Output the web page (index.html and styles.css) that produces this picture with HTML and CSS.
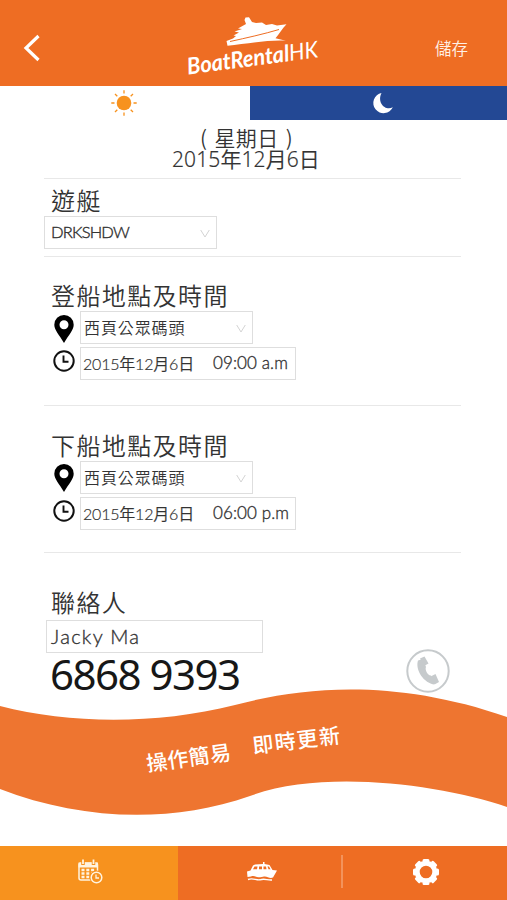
FILE: index.html
```html
<!DOCTYPE html>
<html lang="zh-Hant">
<head>
<meta charset="utf-8">
<title>Boat Rental HK</title>
<link rel="stylesheet" href="styles.css">
</head>
<body>
<svg width="0" height="0" class="defs">
  <symbol id="pin" viewBox="0 0 20 28"><path fill-rule="evenodd" d="M10 0A9.7 9.7 0 0 0 .3 9.7C.3 15 5.500 20 10 28 14.500 20 19.700 15 19.700 9.700A9.700 9.700 0 0 0 10 0ZM10 5.200A4.500 4.500 0 1 1 10 14.200 4.500 4.500 0 0 1 10 5.200Z"/></symbol>
  <symbol id="clock" viewBox="0 0 22 22"><circle cx="11" cy="11" r="9.700" fill="none" stroke="#111" stroke-width="2"/><path d="M10.500 5.500V11.700H15.500" fill="none" stroke="#111" stroke-width="1.900"/></symbol>
  <symbol id="chev" viewBox="0 0 10 9"><path d="M.7 1 5 8 9.300 1" fill="none" stroke="#d3d3d3"/></symbol>
</svg>
<header class="header">
  <svg class="back" viewBox="0 0 18 28"><path d="M15.500 2 3 14 15.500 26" fill="none" stroke="#fff" stroke-width="3.200"/></svg>
  <svg class="logo" viewBox="180 10 150 72">
    <path fill="#fff" d="M226.500 41 233 38.500 236 36 233.500 35.500 239 32.500 234.500 31.500 242 29 238 28.500 246 24 244.500 20 245.500 17.500 249 17.200 252 22 256 23 262 22.500 266 25 272 24 277 25.500 286.500 24.200C282 29 279 34 275.500 38.200L286 40.800C270 39.500 246 44 227.500 45.800Z"/>
    <path d="M230 41.500C246 38 264 34 279 29.500" fill="none" stroke="#ee6d23" stroke-width="1"/>
    <text class="logo-text" transform="translate(188 74.500) rotate(-7.500)" textLength="132" lengthAdjust="spacingAndGlyphs">BoatRental<tspan class="logo-hk">HK</tspan></text>
  </svg>
  <span class="save">儲存</span>
</header>
<nav class="tabs">
  <div class="tab day"><svg width="26" height="26" viewBox="-13 -13 26 26"><circle r="7.300" fill="#f7921e"/><path d="M0-12.700V-9.500M0 9.500V12.700M-12.700 0H-9.500M9.500 0H12.700M-9-9-6.700-6.700M6.700 6.700 9 9M-9 9-6.700 6.700M6.700-6.700 9-9" stroke="#f7921e" stroke-width="1.300"/></svg></div>
  <div class="tab night"><svg width="20" height="20" viewBox="0 0 20 20"><path fill="#fff" d="M8.500 0A10.200 10.200 0 1 0 19.800 14.200C13 18.500 3.500 10 8.500 0Z"/></svg></div>
</nav>
<main>
  <div class="date"><div class="weekday">( 星期日 )</div><div class="full-date">2015年12月6日</div></div>
  <section class="boat">
    <h2>遊艇</h2>
    <div class="select wide"><span class="latin">DRKSHDW</span><svg class="chev"><use href="#chev"/></svg></div>
  </section>
  <section class="trip">
    <h2>登船地點及時間</h2>
    <div class="row"><svg class="pin"><use href="#pin"/></svg><div class="select"><span>西頁公眾碼頭</span><svg class="chev"><use href="#chev"/></svg></div></div>
    <div class="row"><svg class="clock"><use href="#clock"/></svg><div class="time"><span class="day-text">2015年12月6日</span><span class="hour">09:00 a.m</span></div></div>
  </section>
  <section class="trip second">
    <h2>下船地點及時間</h2>
    <div class="row"><svg class="pin"><use href="#pin"/></svg><div class="select"><span>西頁公眾碼頭</span><svg class="chev"><use href="#chev"/></svg></div></div>
    <div class="row"><svg class="clock"><use href="#clock"/></svg><div class="time"><span class="day-text">2015年12月6日</span><span class="hour">06:00 p.m</span></div></div>
  </section>
  <section class="contact">
    <h2>聯絡人</h2>
    <div class="name">Jacky Ma</div>
    <div class="call"><span class="phone">6868 9393</span>
      <svg class="call-icon" viewBox="0 0 44 44"><circle cx="22" cy="22" r="20.700" fill="#fff" stroke="#c6cacc" stroke-width="2"/><path fill="#c6cacc" d="M12 11.500C9.500 19 15 32 27.500 35.500L29 34.500 25 26.500C22 27 18.500 20.500 20 18L17 10Z"/><path fill="#c6cacc" d="M14 9.500 18.500 7.500 22.500 14.500 18 17ZM24.500 27.500 29.500 25 33 33 28.500 35.500Z"/></svg>
    </div>
  </section>
</main>
<svg class="banner" viewBox="0 689 507 127">
  <path fill="#ee7530" d="M0 705C70 723 155 724 235 704C310 684 400 679 507 716V806C440 783 322 768 250 795C170 823 80 819 0 788Z"/>
  <text transform="translate(147.500 770.500) rotate(-8)" textLength="85">操作簡易</text>
  <text transform="translate(253.500 752.500) rotate(-7)" textLength="88">即時更新</text>
</svg>
<footer class="footer">
  <div class="item active"><svg width="26" height="26" viewBox="0 0 26 26">
    <rect x="2" y="4" width="18.500" height="17" rx="2" fill="none" stroke="#fff3df" stroke-width="1.500"/><path d="M1.500 3.500H21V8.500H1.500Z" fill="#fff3df"/><path d="M6 1V6M16.500 1V6" stroke="#f7921e" stroke-width="3.500"/><path d="M6 .5V5M16.500 .5V5" stroke="#fff3df" stroke-width="1.800"/>
    <path d="M4.500 11H18M4.500 14.500H18M4.500 18H14" stroke="#fff3df" stroke-width="2.300" stroke-dasharray="3 1.800"/><circle cx="19.500" cy="18.500" r="7" fill="#f7921e"/><circle cx="19.500" cy="18.500" r="5.300" fill="none" stroke="#fff3df" stroke-width="1.500"/><path d="M19 15.500V19H22" fill="none" stroke="#fff3df" stroke-width="1.300"/></svg></div>
  <div class="item boats"><svg width="32" height="20" viewBox="0 0 32 20"><path fill="#fff" fill-rule="evenodd" d="M1 9.500 4.500 8.500 7 3.500 9 2.500 17 2V0H18.500V2L23.500 3 26.500 8 31 8.500 27 15.500C23 17 21 13.500 17 14.800 12 16.500 9 13 5 14.500L1.500 15ZM8.500 4.500 7 7.200H11L11.500 4.500ZM13 4.500V7.200H16V4.500ZM17.500 4.500V7.200H20.500L20 4.500ZM21.500 4.500 22.500 7.200H24.500L23 4.500Z"/><path d="M2 17.500C7 15.500 10 18.500 14 17.800 19 16 21 18.500 26 18" fill="none" stroke="#fff" stroke-width="1.400"/></svg></div>
  <div class="item settings"><svg width="26" height="26" viewBox="-13 -13 26 26"><circle r="8.800" fill="none" stroke="#fff" stroke-width="5"/><path d="M-2-11.500H2M-2 11.500H2M-11.500-2V2M11.500-2V2M6.700-9.600 9.600-6.700M-6.700-9.600-9.600-6.700M6.700 9.600 9.600 6.700M-6.700 9.600-9.600 6.700" stroke="#fff" stroke-width="3" stroke-linecap="round"/></svg></div>
</footer>
</body>
</html>
```
FILE: styles.css
```css
* { box-sizing: border-box; }
body { margin: 0; width: 507px; height: 900px; background: #fff; color: #333; font-family: "Noto Sans CJK TC", sans-serif; font-weight: 350; display: flex; flex-direction: column; overflow: hidden; }
svg { display: block; flex: none; overflow: visible; }
.defs { display: none; }
.header { height: 86px; flex: none; background: #ee6d23; display: flex; padding: 10px 38px 0 23px; }
.back { width: 18px; height: 28px; margin-top: 24px; }
.logo { width: 150px; height: 72px; margin-left: 139px; }
.logo-text { font: italic 700 23px Lato, sans-serif; fill: #fff; }
.logo-hk { font-weight: 400; }
.save { margin: 26px 1px 0 auto; font-size: 16.500px; line-height: 24px; color: #fff1e6; }
.tabs { height: 34px; flex: none; display: flex; }
.tab { display: flex; }
.day { width: 250px; padding: 4px 0 0 111px; }
.night { flex: 1; background: #234894; padding: 7px 0 0 123px; }
main { height: 570px; flex: none; padding: 0 46px 0 44px; }
.date { height: 59px; padding: 7px 0 0; border-bottom: 1px solid #e8e8e8; text-align: center; line-height: 21px; }
.weekday { font-size: 21px; letter-spacing: .4px; word-spacing: 2px; padding-right: 12px; }
.full-date { position: relative; top: 1px; padding-right: 13px; font-size: 21px; letter-spacing: .1px; font-family: "Noto Sans", "Noto Sans CJK TC", sans-serif; -webkit-text-stroke: .15px; }
h2 { margin: 0 0 0 7px; font-size: 24px; letter-spacing: 1.400px; line-height: 32px; font-weight: 350; }
.boat { height: 78px; padding-top: 5px; border-bottom: 1px solid #e8e8e8; }
.select, .time, .name { border: 1px solid #dedede; display: flex; align-items: center; }
.select { width: 173px; height: 33px; padding: 0 6px 1px 3px; justify-content: space-between; font-size: 16px; letter-spacing: .9px; }
.select.wide { padding-left: 6px; }
.latin { font: 300 16.500px Lato, sans-serif; letter-spacing: -.8px; -webkit-text-stroke: .4px; }
.chev { width: 10px; height: 9px; margin-top: 2px; }
.trip { height: 149px; padding-top: 22px; border-bottom: 1px solid #e8e8e8; }
.trip.second { height: 147px; padding-top: 23px; }
.row { display: flex; margin-bottom: 3px; }
.pin { width: 20px; height: 28px; margin: 4px 6px 0 10px; }
.second .pin { margin-top: 3px; }
.clock { width: 22px; height: 22px; margin: 3px 5px 0 9px; }
.time { width: 216px; height: 33px; padding: 0 0 2px 2px; }
.day-text { width: 130px; font: 350 16px Lato, "Noto Sans CJK TC", sans-serif; letter-spacing: -.2px; -webkit-text-stroke: .2px; }
.hour { font: 300 17px Lato, sans-serif; letter-spacing: .1px; -webkit-text-stroke: .35px; }
.contact { padding-top: 31px; }
.contact h2 { line-height: 36px; }
.name { width: 217px; height: 33px; margin-left: 2px; padding: 0 0 2px 4px; font: 300 20px Lato, sans-serif; letter-spacing: 1.300px; -webkit-text-stroke: .35px; }
.call { display: flex; height: 36px; justify-content: space-between; padding: 0 11px 0 6px; }
.phone { font: 400 42px/42px "Noto Sans", sans-serif; letter-spacing: -1.500px; color: #171717; }
.call-icon { width: 44px; height: 44px; margin-top: -4px; }
.banner { width: 507px; height: 127px; }
.banner text { fill: #fff; font: 500 21px "Noto Sans CJK TC", sans-serif; }
.footer { height: 54px; flex: none; margin-top: auto; background: #ee6d23; display: flex; }
.item { display: flex; }
.active { width: 178px; background: #f7921e; padding: 13px 0 0 77px; }
.boats { width: 165px; padding: 16px 0 0 68px; background: linear-gradient(#f3935b, #f3935b) right 9px / 2px 33px no-repeat; }
.settings { padding: 13px 0 0 70px; }
```
